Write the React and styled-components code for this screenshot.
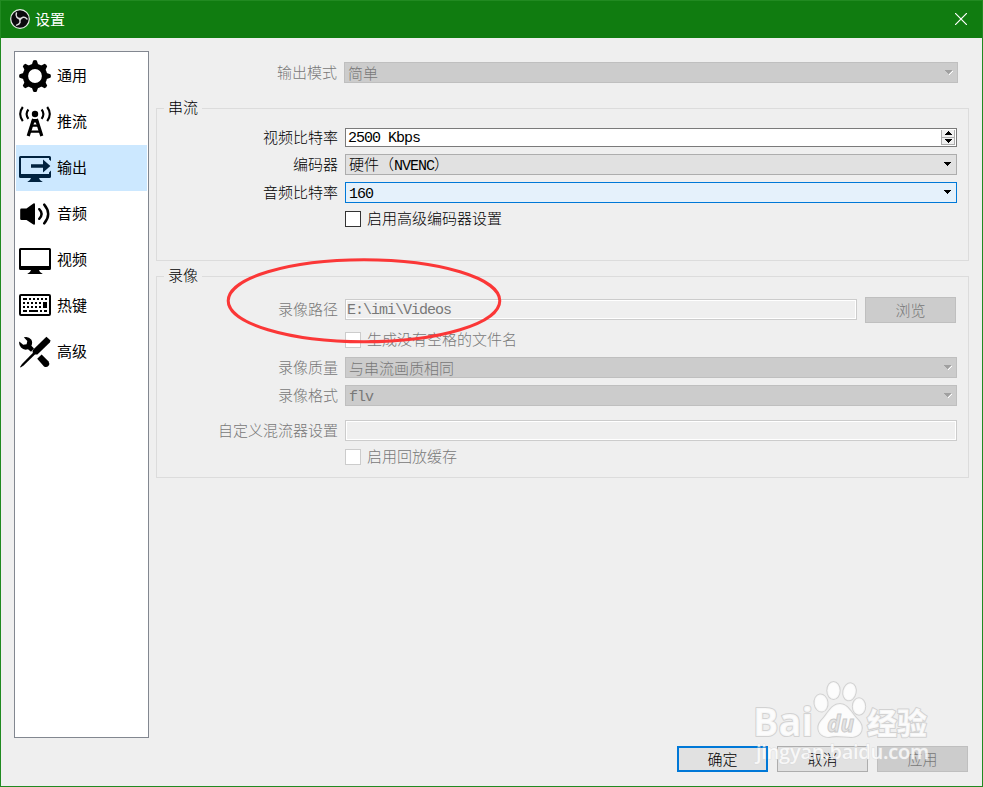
import React from 'react'
import styled, { createGlobalStyle } from 'styled-components';

const GlobalStyle = createGlobalStyle`
  body {
    margin: 0;
    overflow: hidden;
  }
  * {
    box-sizing: border-box;
  }
`;

function ObsLogo() {
  const blades = [0, 120, 240];
  return (
    <svg width="20" height="20" viewBox="0 0 20 20">
      <circle cx="10" cy="10" r="9.3" fill="#0b0a0d" stroke="#e6eee6" strokeWidth="1.2" />
      {blades.map((a) => (
        <path key={a} d="M10.6 9.4C7.6 9.8 5.2 7.6 6.4 4" fill="none" stroke="#dcdcdc" strokeWidth="1.5" strokeLinecap="round" transform={`rotate(${a} 10 10)`} />
      ))}
    </svg>
  )
}

function GearIcon() {
  const teeth = [0, 45, 90, 135, 180, 225, 270, 315];
  return (
    <svg width="32" height="32" viewBox="0 0 32 32">
      <circle cx="16" cy="16" r="9.6" fill="none" stroke="#000" strokeWidth="5.4" />
      {teeth.map((a) => (
        <path key={a} d="M12.4 6L14.2 0.6Q16 -0.4 17.8 0.6L19.6 6Z" transform={`rotate(${a} 16 16)`} />
      ))}
    </svg>
  )
}

function AntennaIcon() {
  return (
    <svg width="32" height="32" viewBox="0 0 32 32">
      <circle cx="16" cy="8" r="3.2" />
      <g fill="none" stroke="#000" strokeWidth="2.1">
        <path d="M3.8 1Q-1.4 8 3.8 15.2M28.2 1Q33.4 8 28.2 15.2" />
        <path d="M9.4 3.5Q5.8 8 9.4 12.8M22.6 3.5Q26.2 8 22.6 12.8" />
        <path d="M14.6 13L9.2 30M17.4 13L22.8 30" strokeWidth="3.2" />
        <path d="M12 19.6H20M10.6 25.6H21.6" strokeWidth="2.2" />
      </g>
      <path d="M13.4 13H18.6L19.8 16.5H12.2Z" />
    </svg>
  )
}

function OutputIcon() {
  return (
    <svg width="32" height="32" viewBox="0 0 32 32" fill="#00223f">
      <path d="M1.5 4H30.5Q32 4 32 5.5V9L30 7.5V6H2V22H30V20.5L32 18.5V24.5Q32 26 30.5 26H1.5Q0 26 0 24.5V5.5Q0 4 1.5 4Z" />
      <path d="M12 12.3H24V7.4L31.4 14L24 20.6V15.8H12Z" />
      <path d="M12 26H20Q20.5 28.8 23.8 30H8.2Q11.5 28.8 12 26Z" />
    </svg>
  )
}

function AudioIcon() {
  return (
    <svg width="32" height="32" viewBox="0 0 32 32">
      <path d="M2.4 10.6H7.5L14.4 5.4Q16 4.8 16 6.6V25.4Q16 27.2 14.4 26.6L7.5 22H2.4Q1.2 22 1.2 20.8V11.8Q1.2 10.6 2.4 10.6Z" />
      <g fill="none" stroke="#000" strokeWidth="2.4" strokeLinecap="round">
        <path d="M20.2 11.2Q25 16 20.2 20.8" />
        <path d="M25.2 6.6Q33.2 16 25.2 25.4" />
      </g>
    </svg>
  )
}

function VideoIcon() {
  return (
    <svg width="32" height="32" viewBox="0 0 32 32">
      <path fillRule="evenodd" d="M1.5 4H30.5Q32 4 32 5.5V24.5Q32 26 30.5 26H1.5Q0 26 0 24.5V5.5Q0 4 1.5 4ZM2 6V22H30V6Z" />
      <path d="M12 26H20Q20.5 28.8 23.8 30H8.2Q11.5 28.8 12 26Z" />
    </svg>
  )
}

function KeyboardIcon() {
  return (
    <svg width="32" height="32" viewBox="0 0 32 32">
      <rect x="1" y="5" width="30" height="20" rx="1" fill="none" stroke="#000" strokeWidth="2" />
      <g fill="none" stroke="#000" strokeWidth="2">
        <path d="M4 9H8M10 9H12M14 9H16M18 9H20M22 9H24M26 9H28" />
        <path d="M4 13H6M8 13H10M12 13H14M16 13H18M20 13H22M24 13H28" />
        <path d="M4 17H6M8 17H10M12 17H14M16 17H18M20 17H22M24 17H28" />
        <path d="M4 21H8M10 21H19M21 21H23M25 21H28" />
      </g>
      <rect x="24" y="12" width="4" height="6" />
    </svg>
  )
}

function ToolsIcon() {
  return (
    <svg width="32" height="32" viewBox="0 0 32 32">
      <path d="M4.8 1.3Q9.6 0 12.2 3.6Q14 6.6 12.4 9.8L15 12.6L12 15.8L9 13.2Q5 14.6 2 11.6Q-0.4 9 0.3 5.4L4.2 8.8L7.6 8.2L8.3 5Z" />
      <path d="M18.2 22.8L22.6 18.6L29.6 25.4Q31 27.4 29.6 29.8Q27.4 32 25 30.4Z" />
      <path d="M27.4 0.8L31.6 4.6L30.8 6.6L18.4 18.4Q15.8 19 14 17.2Q13.2 15.6 13.8 14Z" />
      <path d="M15 15.8L17 17.6L4.6 29.6L1.6 31.6L1 31L3 28Z" />
    </svg>
  )
}

const NAV = [
  { label: '通用', icon: GearIcon },
  { label: '推流', icon: AntennaIcon },
  { label: '输出', icon: OutputIcon },
  { label: '音频', icon: AudioIcon },
  { label: '视频', icon: VideoIcon },
  { label: '热键', icon: KeyboardIcon },
  { label: '高级', icon: ToolsIcon },
];

function Arrow({ disabled }) {
  return (
    <svg width="9" height="6" viewBox="0 0 9 6" shapeRendering="crispEdges">
      {disabled && <path d="M7 1H8V2H7V3H6V4H5V5H4V4H5V3H6V2H7Z" fill="#fff" />}
      <path d="M0 0H7V1H6V2H5V3H4V4H3V3H2V2H1V1H0Z" fill={disabled ? '#a0a0a0' : '#000'} />
    </svg>
  )
}

function Combo({ children, disabled, focused }) {
  return (
    <ComboBox $disabled={disabled} $focused={focused}>
      <span>{children}</span>
      <Arrow disabled={disabled} />
    </ComboBox>
  )
}

function Check({ children, disabled, top }) {
  return (
    <CheckRow $top={top} $disabled={disabled}>
      <CheckMark $disabled={disabled} />
      <CheckText>{children}</CheckText>
    </CheckRow>
  )
}

function Watermark() {
  return (
    <MarkSvg width="190" height="92" viewBox="0 0 190 92">
      <g fill="#fff" fillOpacity="0.82" stroke="#d2d2d2" strokeWidth="2" strokeLinejoin="round" paintOrder="stroke">
        <text x="3" y="57" fontFamily="Open Sans, sans-serif" fontWeight="700" fontSize="39" textLength="60" lengthAdjust="spacingAndGlyphs">Bai</text>
        <ellipse cx="71" cy="24" rx="6.5" ry="8.6" transform="rotate(-8 71 24)" />
        <ellipse cx="83.5" cy="11.5" rx="6.2" ry="8.6" />
        <ellipse cx="99.5" cy="12.8" rx="6.2" ry="8.6" transform="rotate(12 99.5 12.8)" />
        <ellipse cx="109" cy="27.5" rx="6.2" ry="8.2" />
        <path d="M90 25C98 25 101 34 108 41C115 48 112 58 101 58C94 58 86 56 79 58C68 58 66 48 71 42C78 35 81 25 90 25Z" />
        <text x="117" y="55" fontFamily="Noto Sans CJK SC, sans-serif" fontWeight="900" fontSize="30">经验</text>
      </g>
      <text x="77" y="53" fontFamily="Open Sans, sans-serif" fontWeight="700" fontStyle="italic" fontSize="23" fill="#e4e4e4" stroke="#cacaca" strokeWidth="1" textLength="27" lengthAdjust="spacingAndGlyphs">du</text>
      <text x="6" y="80" fontFamily="Open Sans, sans-serif" fontSize="20" fontWeight="600" fill="#fff" fillOpacity="0.8" stroke="#d8d8d8" strokeOpacity="0.7" strokeWidth="1" paintOrder="stroke" textLength="173">jingyan.baidu.com</text>
    </MarkSvg>
  )
}

export default function App() {
  return (
    <Dialog>
      <GlobalStyle />
      <TitleBar>
        <ObsLogo />
        <Title>设置</Title>
        <svg width="12" height="12" viewBox="0 0 12 12" stroke="#fff" strokeWidth="1.2">
          <path d="M0 0L12 12M12 0L0 12" />
        </svg>
      </TitleBar>
      <Body>
        <Sidebar>
          {NAV.map(({ label, icon: Icon }) => (
            <NavItem key={label} $active={label === '输出'}>
              <Icon />
              <NavText>{label}</NavText>
            </NavItem>
          ))}
        </Sidebar>

        <Page>
          <ModeRow>
            <Label $disabled>输出模式</Label>
            <Combo disabled>简单</Combo>
          </ModeRow>

          <Group $top={15} $height={163}>
            <Legend>串流</Legend>
            <Row $top={10} $height={19}>
              <Label>视频比特率</Label>
              <SpinBox>
                <Latin>2500 Kbps</Latin>
                <SpinButtons>
                  <SpinButton>
                    <svg width="7" height="4" viewBox="0 0 7 4" shapeRendering="crispEdges"><path d="M3 0H4V1H5V2H6V3H7V4H0V3H1V2H2V1H3Z" /></svg>
                  </SpinButton>
                  <SpinButton>
                    <svg width="7" height="4" viewBox="0 0 7 4" shapeRendering="crispEdges"><path d="M0 0H7V1H6V2H5V3H4V4H3V3H2V2H1V1H0Z" /></svg>
                  </SpinButton>
                </SpinButtons>
              </SpinBox>
            </Row>
            <Row $top={7}>
              <Label>编码器</Label>
              <Combo>硬件（<Latin $inline>NVENC</Latin>）</Combo>
            </Row>
            <Row $top={7}>
              <Label>音频比特率</Label>
              <Combo focused><Latin>160</Latin></Combo>
            </Row>
            <Check top={8}>启用高级编码器设置</Check>
          </Group>

          <Group $top={5} $height={212}>
            <Legend>录像</Legend>
            <Row $top={11} $height={26}>
              <Label $disabled>录像路径</Label>
              <TextInput $lift><Latin>E:\imi\Videos</Latin></TextInput>
              <BrowseButton $disabled>浏览</BrowseButton>
            </Row>
            <Check top={9} disabled>生成没有空格的文件名</Check>
            <Row $top={9}>
              <Label $disabled>录像质量</Label>
              <Combo disabled>与串流画质相同</Combo>
            </Row>
            <Row $top={7}>
              <Label $disabled>录像格式</Label>
              <Combo disabled><Latin>flv</Latin></Combo>
            </Row>
            <Row $top={14}>
              <Label $disabled>自定义混流器设置</Label>
              <TextInput />
            </Row>
            <Check top={8} disabled>启用回放缓存</Check>
          </Group>
        </Page>
      </Body>

      <Footer>
        <Button $primary>确定</Button>
        <Button>取消</Button>
        <Button $disabled>应用</Button>
      </Footer>

      <Circle width="280" height="90" viewBox="0 0 280 90">
        <ellipse cx="140" cy="44.8" rx="135.8" ry="41" fill="none" stroke="#fb3737" strokeWidth="3" />
      </Circle>
      <Watermark />
    </Dialog>
  )
}


const Dialog = styled.div`
  position: relative;
  width: 983px;
  height: 787px;
  display: flex;
  flex-direction: column;
  background: #efefef;
  border: 1px solid #218a21;
  color: #000;
  font-family: 'Noto Sans CJK SC', sans-serif;
  font-size: 15px;
  font-weight: 300;
`;

const TitleBar = styled.div`
  height: 37px;
  flex: none;
  display: flex;
  align-items: center;
  padding: 0 15px 1px 9px;
  background: #107c10;
`;

const Title = styled.span`
  flex: 1;
  margin-left: 5px;
  padding-bottom: 1px;
  color: #fff;
  font-weight: 400;
  line-height: 20px;
`;

const Body = styled.div`
  display: flex;
  height: 700px;
  padding: 13px 13px 0;
`;

const Sidebar = styled.div`
  width: 135px;
  height: 687px;
  flex: none;
  padding: 1px;
  background: #fff;
  border: 1px solid #828790;
`;

const NavItem = styled.div`
  height: 46px;
  display: flex;
  align-items: center;
  gap: 6px;
  padding-left: 3px;
  background: ${(p) => (p.$active ? '#cce8ff' : 'transparent')};
`;

const NavText = styled.span`
  padding-bottom: 2px;
  font-weight: 400;
  line-height: 20px;
`;

const Page = styled.div`
  flex: 1;
  margin-left: 7px;
  padding-top: 11px;
`;

const Row = styled.div`
  display: flex;
  align-items: center;
  height: ${(p) => p.$height || 21}px;
  margin-top: ${(p) => p.$top}px;
`;

const ModeRow = styled.div`
  display: flex;
  align-items: center;
  height: 21px;
  margin-right: 11px;
`;

const Label = styled.span`
  width: 181px;
  flex: none;
  margin-right: 7px;
  padding-bottom: 2px;
  text-align: right;
  white-space: nowrap;
  line-height: 20px;
  color: ${(p) => (p.$disabled ? '#787878' : '#000')};
`;

// half-width characters are 8px apart
const Latin = styled.span`
  display: inline-block;
  padding-top: ${(p) => (p.$inline ? 0 : 3)}px;
  font-family: 'Liberation Mono', monospace;
  font-size: 15px;
  letter-spacing: -1px;
  line-height: 16px;
  white-space: pre;
`;

const Group = styled.fieldset`
  min-width: 0;
  height: ${(p) => p.$height}px;
  margin: ${(p) => p.$top}px 0 0;
  padding: 0 11px 0 0;
  border: 1px solid #dcdcdc;
`;

const Legend = styled.legend`
  height: 20px;
  margin-left: 7px;
  padding: 0 4px;
  line-height: 18px;
`;

const ComboBox = styled.div`
  flex: 1;
  height: 21px;
  display: flex;
  align-items: center;
  justify-content: space-between;
  padding: 0 3px 0 3px;
  border: 1px solid ${(p) => (p.$focused ? '#0078d7' : p.$disabled ? '#bfbfbf' : '#adadad')};
  background: ${(p) => (p.$focused ? '#e5f1fb' : p.$disabled ? '#cccccc' : '#e1e1e1')};
  color: ${(p) => (p.$disabled ? '#787878' : '#000')};
  line-height: 18px;
`;

const SpinBox = styled.div`
  flex: 1;
  height: 19px;
  display: flex;
  align-items: center;
  justify-content: space-between;
  padding: 0 1px 0 2px;
  border: 1px solid #7a7a7a;
  background: #fff;
`;

const SpinButtons = styled.div`
  width: 14px;
  height: 15px;
  display: flex;
  flex-direction: column;
`;

const SpinButton = styled.div`
  flex: 1;
  display: flex;
  align-items: center;
  justify-content: center;
  background: #f0f0f0;
  border: 1px solid #adadad;
  border-top: 0;
`;

const TextInput = styled.div`
  flex: 1;
  height: 21px;
  display: flex;
  align-items: center;
  margin-bottom: ${(p) => (p.$lift ? 1 : 0)}px;
  padding-left: 1px;
  border: 1px solid #cccccc;
  box-shadow: inset 0 0 0 1px #fff;
  color: #787878;
`;

const CheckRow = styled.div`
  display: flex;
  align-items: center;
  gap: 6px;
  height: 16px;
  margin: ${(p) => p.$top}px 0 0 188px;
  color: ${(p) => (p.$disabled ? '#787878' : '#000')};
`;

const CheckMark = styled.span`
  width: 16px;
  height: 16px;
  background: #fff;
  border: 1px solid ${(p) => (p.$disabled ? '#cccccc' : '#333')};
`;

const CheckText = styled.span`
  padding-bottom: 2px;
  line-height: 20px;
`;

const Button = styled.button`
  width: 91px;
  height: 26px;
  padding: 0;
  border: ${(p) => (p.$primary ? '2px solid #0078d7' : p.$disabled ? '1px solid #bfbfbf' : '1px solid #adadad')};
  background: ${(p) => (p.$disabled ? '#cccccc' : '#e1e1e1')};
  color: ${(p) => (p.$disabled ? '#787878' : '#000')};
  font-family: 'Noto Sans CJK SC', sans-serif;
  font-size: 15px;
  font-weight: 300;
  line-height: 20px;
`;

const BrowseButton = styled(Button)`
  margin: 0 1px 0 8px;
`;

const Footer = styled.div`
  display: flex;
  justify-content: flex-end;
  gap: 9px;
  padding: 8px 14px 0 0;
`;

// red pen mark laid over the recording path row
const Circle = styled.svg`
  position: absolute;
  left: 223px;
  top: 255px;
  pointer-events: none;
`;

const MarkSvg = styled.svg`
  position: absolute;
  left: 749px;
  top: 678px;
  pointer-events: none;
`;
